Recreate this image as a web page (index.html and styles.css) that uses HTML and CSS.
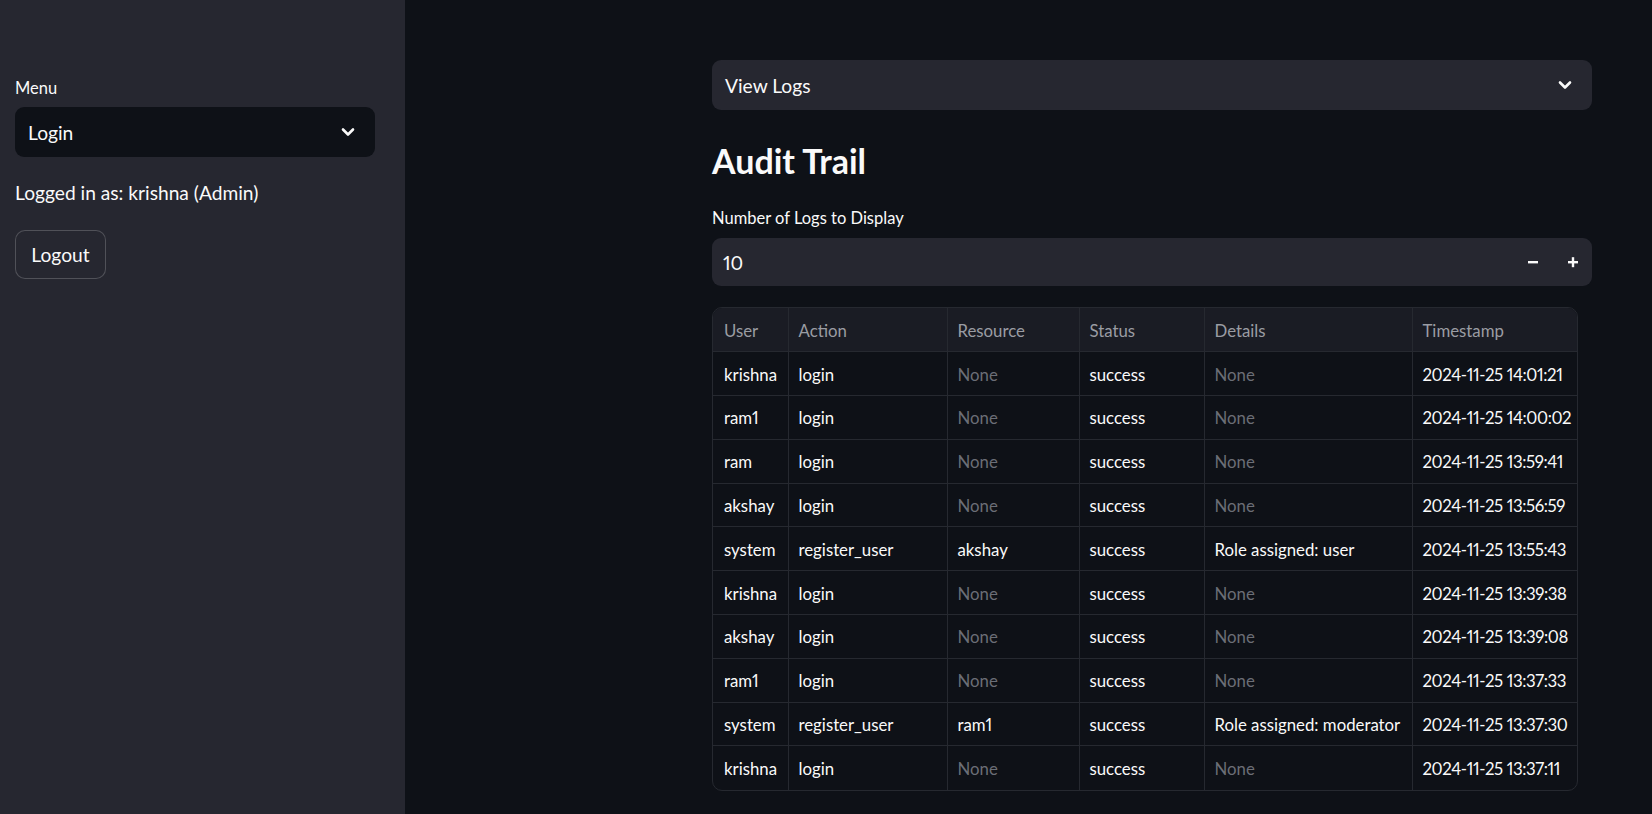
FILE: index.html
```html
<!DOCTYPE html>
<html>
<head>
<meta charset="utf-8">
<link rel="stylesheet" href="styles.css">
</head>
<body>
<div class="app">
  <aside class="sidebar">
    <div class="field-label">Menu</div>
    <div class="select select-dark">
      <span>Login</span>
      <svg class="chev" width="14" height="10" viewBox="0 0 14 10"><polyline points="2,2.5 7,7.5 12,2.5" fill="none" stroke="#fafafa" stroke-width="2.6" stroke-linecap="round" stroke-linejoin="round"/></svg>
    </div>
    <p class="status">Logged in as: krishna (Admin)</p>
    <button class="btn">Logout</button>
  </aside>
  <main class="main">
    <div class="content">
      <div class="select select-light">
        <span>View Logs</span>
        <svg class="chev" width="14" height="10" viewBox="0 0 14 10"><polyline points="2,2.5 7,7.5 12,2.5" fill="none" stroke="#fafafa" stroke-width="2.6" stroke-linecap="round" stroke-linejoin="round"/></svg>
      </div>
      <h2 class="title">Audit Trail</h2>
      <div class="field-label field-label-main">Number of Logs to Display</div>
      <div class="number">
        <span class="num-val">10</span>
        <div class="steps">
          <svg width="14" height="14" viewBox="0 0 14 14"><rect x="2" y="6" width="10" height="2.4" fill="#fafafa"/></svg>
          <svg width="14" height="14" viewBox="0 0 14 14"><rect x="2" y="6" width="10" height="2.4" fill="#fafafa"/><rect x="5.8" y="2.2" width="2.4" height="10" fill="#fafafa"/></svg>
        </div>
      </div>
      <div class="table-wrap">
        <table class="grid">
          <colgroup>
            <col class="c1"><col class="c2"><col class="c3"><col class="c4"><col class="c5"><col class="c6">
          </colgroup>
          <thead>
            <tr><th>User</th><th>Action</th><th>Resource</th><th>Status</th><th>Details</th><th>Timestamp</th></tr>
          </thead>
          <tbody>
            <tr><td>krishna</td><td>login</td><td class="none">None</td><td>success</td><td class="none">None</td><td class="ts">2024-11-25 14:01:21</td></tr>
            <tr><td>ram1</td><td>login</td><td class="none">None</td><td>success</td><td class="none">None</td><td class="ts">2024-11-25 14:00:02</td></tr>
            <tr><td>ram</td><td>login</td><td class="none">None</td><td>success</td><td class="none">None</td><td class="ts">2024-11-25 13:59:41</td></tr>
            <tr><td>akshay</td><td>login</td><td class="none">None</td><td>success</td><td class="none">None</td><td class="ts">2024-11-25 13:56:59</td></tr>
            <tr><td>system</td><td>register_user</td><td>akshay</td><td>success</td><td>Role assigned: user</td><td class="ts">2024-11-25 13:55:43</td></tr>
            <tr><td>krishna</td><td>login</td><td class="none">None</td><td>success</td><td class="none">None</td><td class="ts">2024-11-25 13:39:38</td></tr>
            <tr><td>akshay</td><td>login</td><td class="none">None</td><td>success</td><td class="none">None</td><td class="ts">2024-11-25 13:39:08</td></tr>
            <tr><td>ram1</td><td>login</td><td class="none">None</td><td>success</td><td class="none">None</td><td class="ts">2024-11-25 13:37:33</td></tr>
            <tr><td>system</td><td>register_user</td><td>ram1</td><td>success</td><td>Role assigned: moderator</td><td class="ts">2024-11-25 13:37:30</td></tr>
            <tr><td>krishna</td><td>login</td><td class="none">None</td><td>success</td><td class="none">None</td><td class="ts">2024-11-25 13:37:11</td></tr>
          </tbody>
        </table>
      </div>
    </div>
  </main>
</div>
</body>
</html>
```

FILE: styles.css
```css
* { box-sizing: border-box; }
html, body {
  margin: 0;
  padding: 0;
  height: 100%;
  background: #0e1117;
  color: #fafafa;
  font-family: Lato, "Noto Sans", sans-serif;
  font-variant-numeric: proportional-nums;
  overflow: hidden;
}
.app {
  display: flex;
  height: 814px;
}
.sidebar {
  width: 405px;
  flex: none;
  background: #262730;
  padding: 74px 30px 0 15px;
  display: flex;
  flex-direction: column;
  align-items: flex-start;
}
.field-label {
  font-size: 16.5px;
  line-height: 28px;
  height: 28px;
  margin-bottom: 5px;
}
.field-label-main {
  line-height: 26px;
  height: 26px;
  margin-bottom: 7px;
}
.select {
  width: 100%;
  height: 50px;
  border-radius: 9px;
  display: flex;
  align-items: center;
  justify-content: space-between;
  padding: 0 20px 0 13px;
  font-size: 19.2px;
  flex: none;
}
.select-dark { background: #0e1117; }
.select-light { background: #262730; }
.chev { display: block; }
.status {
  margin: 20px 0 0;
  font-size: 19.2px;
  line-height: 32px;
}
.btn {
  margin-top: 21px;
  width: 91px;
  height: 49px;
  background: #262730;
  color: #fafafa;
  border: 1px solid rgba(250, 250, 250, 0.2);
  border-radius: 10px;
  font-family: inherit;
  font-size: 19.2px;
  padding: 0;
}
.main {
  flex: 1;
  padding: 60px 0 0 307px;
}
.content {
  width: 880px;
  display: flex;
  flex-direction: column;
}
.title {
  margin: 30px 0 23px;
  font-size: 34px;
  line-height: 42px;
  font-weight: 700;
}
.number {
  height: 48px;
  background: #262730;
  border-radius: 9px;
  display: flex;
  align-items: center;
  justify-content: space-between;
  padding: 0 12px 0 11px;
  font-size: 19.2px;
}
.steps {
  display: flex;
  gap: 26px;
  align-items: center;
}
.steps svg { display: block; }
.table-wrap {
  margin-top: 21px;
  width: 866px;
  border: 1px solid #262930;
  border-radius: 10px;
  overflow: hidden;
}
.grid {
  width: 100%;
  border-collapse: collapse;
  table-layout: fixed;
  font-size: 16.8px;
}
.c1 { width: 75px; }
.c2 { width: 159px; }
.c3 { width: 132px; }
.c4 { width: 125px; }
.c5 { width: 208px; }
.c6 { width: 165px; }
.grid th, .grid td {
  height: 43.8px;
  padding: 1px 8px 0 10px;
  text-align: left;
  white-space: nowrap;
  overflow: hidden;
  border-right: 1px solid #262930;
  border-bottom: 1px solid #262930;
}
.grid th:first-child, .grid td:first-child { padding-left: 11px; }
.grid th:last-child, .grid td:last-child { border-right: none; padding-right: 2px; }
.grid tbody tr:last-child td { border-bottom: none; }
.grid th {
  background: #1a1c24;
  color: #9a9ca3;
  font-weight: 400;
}
.grid td { color: #fafafa; }
.grid td.none { color: #6b6e76; }
.grid td.ts { letter-spacing: -0.4px; }
```
